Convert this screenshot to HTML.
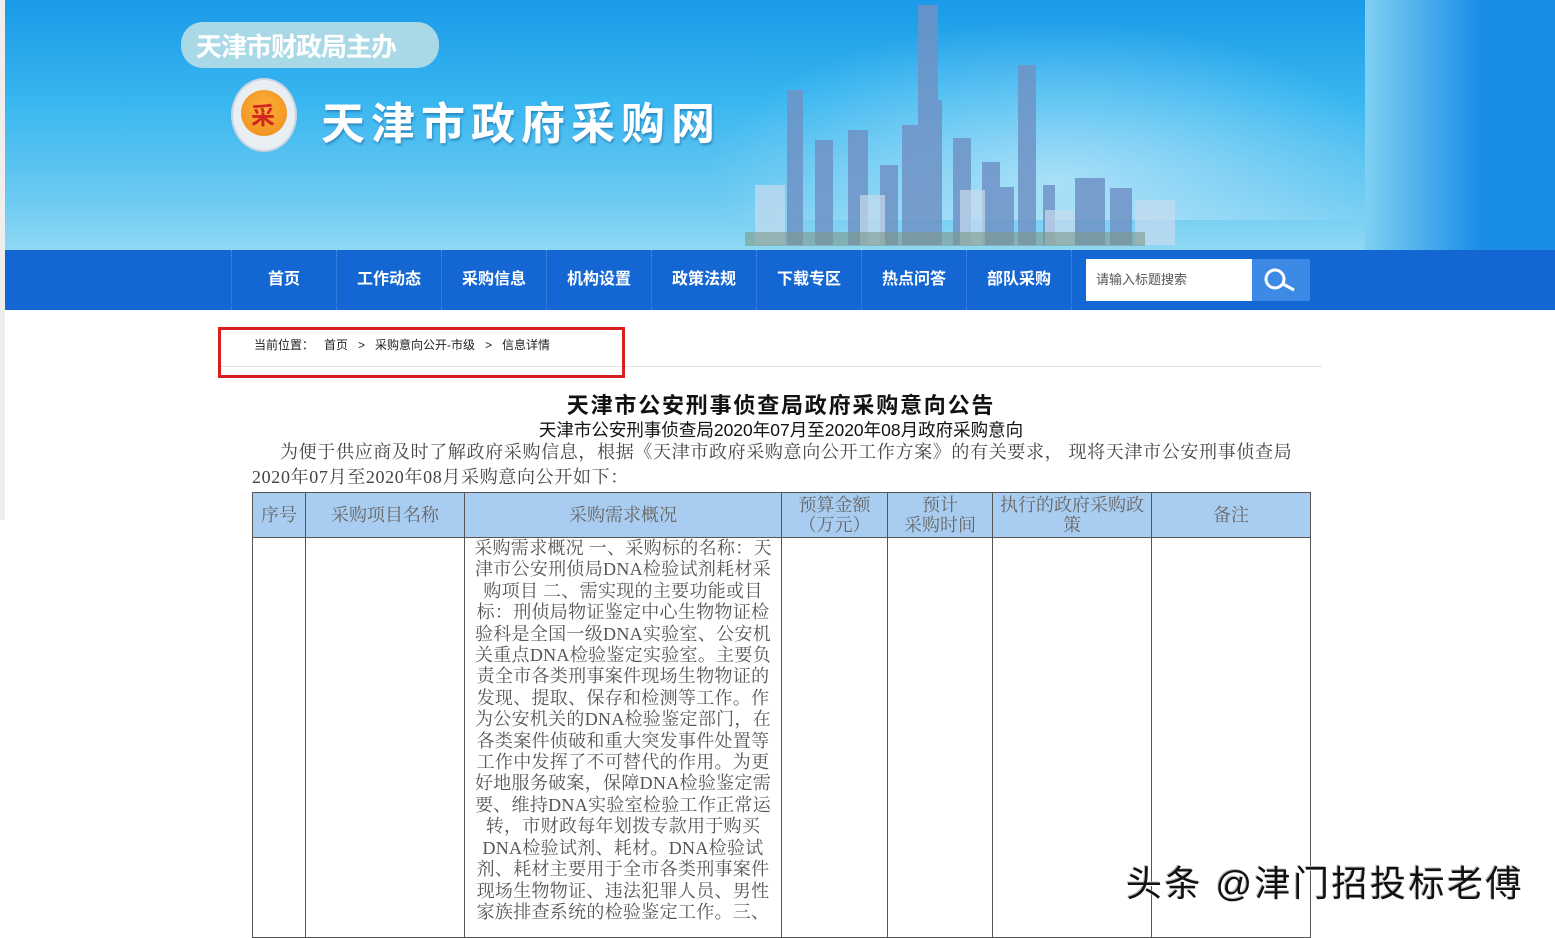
<!DOCTYPE html>
<html><head><meta charset="utf-8">
<style>
*{margin:0;padding:0;box-sizing:border-box}
body{width:1555px;height:924px;overflow:hidden;background:#fff;position:relative;font-family:"Liberation Sans","Noto Sans CJK SC",sans-serif}
.abs{position:absolute}
#banner{left:5px;top:0;width:1550px;height:250px;background:linear-gradient(180deg,#1a9ae8 0%,#38b6f0 40%,#6ccaf2 80%,#8fd8f4 100%);overflow:hidden}
#nav{left:5px;top:250px;width:1550px;height:60px;background:#1467d3}
.ni{position:absolute;top:0;height:60px;width:105px;border-left:1px dotted #4f8fe0;color:#fff;font-size:16px;font-weight:bold;text-align:center;line-height:60px}
.serif{font-family:"Liberation Serif","Noto Serif CJK SC",serif}
table{border-collapse:collapse;position:absolute;left:252px;top:492px;table-layout:fixed}
td{border:1px solid #555;color:#666;font-size:18px;text-align:center;vertical-align:middle;font-family:"Liberation Serif","Noto Serif CJK SC",serif;line-height:20px}
thead td{background:#a9cdf0;height:45px}
.body td{height:400px;vertical-align:top}
.cell{padding-top:0;line-height:21.4px;color:#555;white-space:nowrap;letter-spacing:.3px}
</style></head><body>
<div class="abs" style="left:0;top:0;width:5px;height:520px;background:#eee"></div>
<div id="banner" class="abs">
 <div class="abs" style="left:700px;top:20px;width:700px;height:200px;background:radial-gradient(ellipse at 50% 80%,rgba(255,255,255,.45),rgba(255,255,255,0) 70%)"></div>
 <div class="abs" style="left:1360px;top:0;width:190px;height:250px;background:linear-gradient(90deg,#7fd0f2,#1a8ee6 60%,#1a8ee6)"></div>
 <svg class="abs" style="left:0;top:0" width="1550" height="250">
  <g fill="#6f93c6" opacity=".85">
   <rect x="782" y="90" width="16" height="155"/>
   <rect x="810" y="140" width="18" height="105"/>
   <rect x="843" y="130" width="20" height="115"/>
   <rect x="875" y="165" width="18" height="80"/>
   <rect x="897" y="125" width="20" height="120"/>
   <rect x="913" y="5" width="20" height="240"/>
   <rect x="925" y="100" width="12" height="145"/>
   <rect x="948" y="138" width="18" height="107"/>
   <rect x="977" y="162" width="18" height="83"/>
   <rect x="995" y="187" width="14" height="58"/>
   <rect x="1013" y="65" width="18" height="180"/>
   <rect x="1038" y="185" width="12" height="60"/>
   <rect x="1070" y="178" width="30" height="67"/>
   <rect x="1105" y="188" width="22" height="57"/>
  </g>
  <g fill="#c8dbee" opacity=".7">
   <rect x="750" y="185" width="30" height="60"/>
   <rect x="855" y="195" width="25" height="50"/>
   <rect x="955" y="190" width="25" height="55"/>
   <rect x="1040" y="210" width="30" height="35"/>
   <rect x="1130" y="200" width="40" height="45"/>
  </g>
  <rect x="740" y="232" width="400" height="14" fill="#7f9a8a" opacity=".6"/>
 </svg>
 <div class="abs" style="left:176px;top:22px;width:258px;height:46px;border-radius:22px;background:#a9d9e6"></div>
 <div class="abs" style="left:191px;top:27px;font-size:26px;font-weight:bold;color:#fff;letter-spacing:-1px">天津市财政局主办</div>
 <div class="abs" style="left:226px;top:78px;width:66px;height:74px;border-radius:50%;background:#e9eef3;border:2px solid #c9d5e0"></div>
 <div class="abs" style="left:236px;top:90px;width:46px;height:46px;border-radius:50%;background:radial-gradient(circle at 50% 40%,#fbb23a,#f08a1a)"></div>
 <div class="abs" style="left:246px;top:96px;font-size:24px;color:#d2271f;font-weight:bold">采</div>
 <div class="abs" style="left:316px;top:88px;font-size:44px;font-weight:bold;color:#fff;letter-spacing:6px;text-shadow:1px 2px 2px rgba(0,60,120,.4)">天津市政府采购网</div>
</div>
<div id="nav" class="abs">
 <div class="ni" style="left:226px">首页</div>
 <div class="ni" style="left:331px">工作动态</div>
 <div class="ni" style="left:436px">采购信息</div>
 <div class="ni" style="left:541px">机构设置</div>
 <div class="ni" style="left:646px">政策法规</div>
 <div class="ni" style="left:751px">下载专区</div>
 <div class="ni" style="left:856px">热点问答</div>
 <div class="ni" style="left:961px">部队采购</div>
 <div class="ni" style="left:1066px;width:1px"></div>
 <div class="abs" style="left:1081px;top:9px;width:166px;height:42px;background:#fff;color:#555;font-size:13px;line-height:42px;padding-left:10px">请输入标题搜索</div>
 <div class="abs" style="left:1247px;top:9px;width:58px;height:42px;background:#3d8ae6">
  <svg width="58" height="42"><circle cx="23" cy="20" r="9" fill="none" stroke="#fff" stroke-width="3"/><line x1="31" y1="25" x2="42" y2="31" stroke="#fff" stroke-width="3"/></svg>
 </div>
</div>
<div class="abs" style="left:220px;top:366px;width:1102px;height:1px;background:#e4e4e4"></div>
<div class="abs" style="left:218px;top:327px;width:407px;height:51px;border:3px solid #d81e1e"></div>
<div class="abs" style="left:254px;top:336px;font-size:12px;color:#222;white-space:pre">当前位置：   首页   &gt;   采购意向公开-市级   &gt;   信息详情</div>
<div class="abs" style="left:0;width:1562px;top:388px;text-align:center;font-size:22px;font-weight:bold;color:#111;letter-spacing:1.8px">天津市公安刑事侦查局政府采购意向公告</div>
<div class="abs" style="left:0;width:1562px;top:417px;text-align:center;font-size:17.5px;color:#111">天津市公安刑事侦查局2020年07月至2020年08月政府采购意向</div>
<div class="abs serif" style="left:252px;top:440px;width:1080px;font-size:18px;line-height:25px;color:#444;letter-spacing:.65px;white-space:nowrap"><span style="margin-left:28px">为便于供应商及时了解政府采购信息，根据《天津市政府采购意向公开工作方案》的有关要求， 现将天津市公安刑事侦查局</span><br>2020年07月至2020年08月采购意向公开如下：</div>
<table>
<colgroup><col style="width:53px"><col style="width:159px"><col style="width:317px"><col style="width:106px"><col style="width:105px"><col style="width:159px"><col style="width:159px"></colgroup>
<thead><tr><td>序号</td><td>采购项目名称</td><td>采购需求概况</td><td>预算金额<br>（万元）</td><td>预计<br>采购时间</td><td>执行的政府采购政<br>策</td><td>备注</td></tr></thead>
<tbody class="body"><tr><td></td><td></td><td><div class="cell">采购需求概况 一、采购标的名称：天<br>津市公安刑侦局DNA检验试剂耗材采<br>购项目 二、需实现的主要功能或目<br>标：刑侦局物证鉴定中心生物物证检<br>验科是全国一级DNA实验室、公安机<br>关重点DNA检验鉴定实验室。主要负<br>责全市各类刑事案件现场生物物证的<br>发现、提取、保存和检测等工作。作<br>为公安机关的DNA检验鉴定部门，在<br>各类案件侦破和重大突发事件处置等<br>工作中发挥了不可替代的作用。为更<br>好地服务破案，保障DNA检验鉴定需<br>要、维持DNA实验室检验工作正常运<br>转，市财政每年划拨专款用于购买<br>DNA检验试剂、耗材。DNA检验试<br>剂、耗材主要用于全市各类刑事案件<br>现场生物物证、违法犯罪人员、男性<br>家族排查系统的检验鉴定工作。三、</div></td><td></td><td></td><td></td><td></td></tr></tbody>
</table>
<div class="abs" style="left:1126px;top:855px;font-size:36px;color:#111;letter-spacing:2.5px;text-shadow:1px 1px 0 #fff,-1px -1px 0 #bbb">头条 @津门招投标老傅</div>
</body></html>
